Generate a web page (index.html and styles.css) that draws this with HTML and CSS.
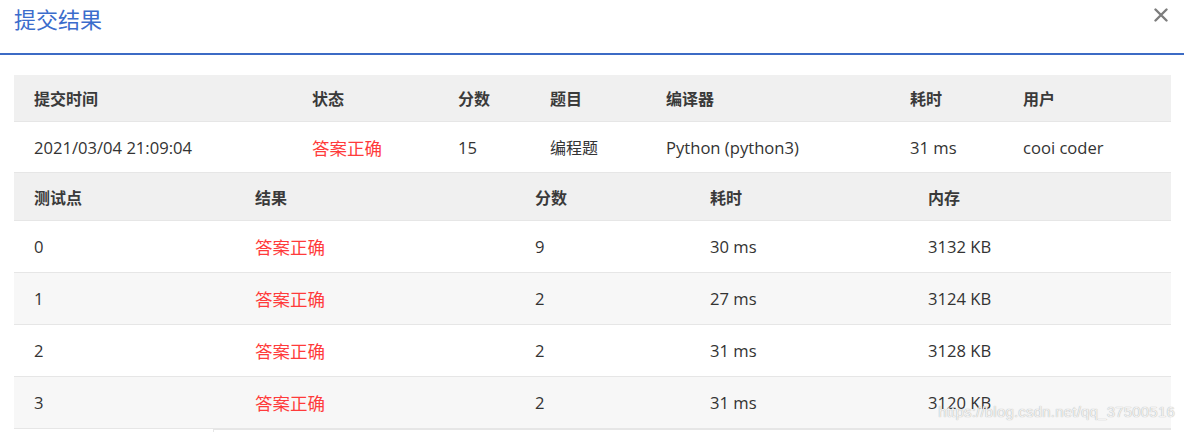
FILE: index.html
```html
<!DOCTYPE html>
<html lang="zh-CN">
<head>
<meta charset="utf-8">
<title>提交结果</title>
<link rel="stylesheet" href="styles.css">
</head>
<body>
<div class="dialog">
  <div class="dlg-head">
    <h1 class="dlg-title">提交结果</h1>
    <svg class="dlg-close" width="14" height="14" viewBox="0 0 14 14" aria-label="关闭">
      <path d="M1.5 1.5 L12.5 12.5 M12.5 1.5 L1.5 12.5" stroke="#7d7d7d" stroke-width="2.4" stroke-linecap="round" fill="none"/>
    </svg>
  </div>
  <div class="dlg-body">
    <table class="tbl tbl-sub">
      <colgroup>
        <col class="c1"><col class="c2"><col class="c3"><col class="c4"><col class="c5"><col class="c6"><col class="c7">
      </colgroup>
      <thead>
        <tr><th>提交时间</th><th>状态</th><th>分数</th><th>题目</th><th>编译器</th><th>耗时</th><th>用户</th></tr>
      </thead>
      <tbody>
        <tr><td>2021/03/04 21:09:04</td><td class="ok">答案正确</td><td>15</td><td class="cjk">编程题</td><td>Python (python3)</td><td>31 ms</td><td>cooi coder</td></tr>
      </tbody>
    </table>
    <table class="tbl tbl-case">
      <colgroup>
        <col class="d1"><col class="d2"><col class="d3"><col class="d4"><col class="d5">
      </colgroup>
      <thead>
        <tr><th>测试点</th><th>结果</th><th>分数</th><th>耗时</th><th>内存</th></tr>
      </thead>
      <tbody>
        <tr><td>0</td><td class="ok">答案正确</td><td>9</td><td>30 ms</td><td>3132 KB</td></tr>
        <tr><td>1</td><td class="ok">答案正确</td><td>2</td><td>27 ms</td><td>3124 KB</td></tr>
        <tr><td>2</td><td class="ok">答案正确</td><td>2</td><td>31 ms</td><td>3128 KB</td></tr>
        <tr><td>3</td><td class="ok">答案正确</td><td>2</td><td>31 ms</td><td>3120 KB</td></tr>
      </tbody>
    </table>
    <div class="below"><div class="below-box"></div></div>
  </div>
  <div class="watermark">https://blog.csdn.net/qq_37500516</div>
</div>
</body>
</html>
```
FILE: styles.css
```css
html, body {
  margin: 0;
  padding: 0;
  background: #fff;
}
body {
  font-family: "Open Sans", "Noto Sans CJK SC", sans-serif;
  color: #333;
  overflow: hidden;
}
.dialog {
  position: relative;
  width: 1184px;
  height: 432px;
}
.dlg-head {
  height: 53px;
  border-bottom: 2px solid #3c6bc5;
  display: flex;
  align-items: flex-start;
  justify-content: space-between;
  padding: 0 16px 0 14px;
  box-sizing: content-box;
}
.dlg-title {
  margin: 3px 0 0 0;
  font-family: "Noto Sans CJK SC", sans-serif;
  font-weight: 400;
  font-size: 22px;
  line-height: 30px;
  color: #3b6ccc;
}
.dlg-close {
  margin-top: 8px;
  display: block;
}
.dlg-body {
  padding: 20px 13px 0 14px;
}
.tbl {
  width: 1157px;
  border-collapse: collapse;
  table-layout: fixed;
}
.tbl th, .tbl td {
  text-align: left;
  padding: 0 0 0 20px;
  white-space: nowrap;
  border-bottom: 1px solid #e6e6e6;
}
.tbl th {
  background: #f0f0f0;
  font-family: "Noto Sans CJK SC", sans-serif;
  font-weight: 700;
  font-size: 16px;
  color: #3a3a3a;
}
.tbl td {
  font-size: 16.6px;
  color: #333;
}
.tbl-sub th { height: 46px; }
.tbl-sub td { height: 50px; }
.tbl-case th { height: 47px; }
.tbl-case td { height: 51px; }
.tbl-case tbody tr:nth-child(even) td { background: #f7f7f7; }
.tbl td.ok {
  font-family: "Noto Sans CJK SC", sans-serif;
  color: #ff3b3b;
  font-size: 17.5px;
}
.tbl td.cjk {
  font-family: "Noto Sans CJK SC", sans-serif;
  font-size: 16px;
}
.c1 { width: 278px; }
.c2 { width: 146px; }
.c3 { width: 92px; }
.c4 { width: 116px; }
.c5 { width: 244px; }
.c6 { width: 113px; }
.c7 { width: 168px; }
.d1 { width: 221px; }
.d2 { width: 280px; }
.d3 { width: 175px; }
.d4 { width: 218px; }
.d5 { width: 263px; }
.below {
  padding-left: 199px;
}
.below-box {
  height: 10px;
  border-left: 1px solid #e6e6e6;
  border-top: 1px solid #e6e6e6;
}
.watermark {
  position: absolute;
  right: 9px;
  top: 403px;
  font-family: "Liberation Sans", sans-serif;
  font-size: 15px;
  color: #f2f2f2;
  text-shadow: 0 0 1px #9a9a9a;
  letter-spacing: 0.2px;
}
```
